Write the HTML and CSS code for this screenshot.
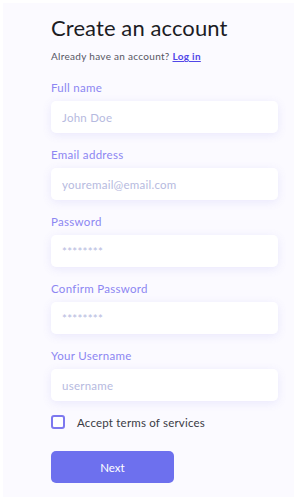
FILE: index.html
```html
<!DOCTYPE html>
<html lang="en">
<head>
    <meta charset="UTF-8">
    <meta name="viewport" content="width=device-width, initial-scale=1.0">
    <title>Create an account</title>
    <link rel="stylesheet" href="styles.css">
</head>
<body>
    <div class="panel">
        <form class="signup">
            <h1>Create an account</h1>
            <p class="subtitle">Already have an account? <a href="#">Log in</a></p>

            <div class="field">
                <label for="fullName">Full name</label>
                <input type="text" id="fullName" placeholder="John Doe">
            </div>
            <div class="field">
                <label for="email">Email address</label>
                <input type="email" id="email" placeholder="youremail@email.com">
            </div>
            <div class="field">
                <label for="password">Password</label>
                <input type="text" id="password" placeholder="********">
            </div>
            <div class="field">
                <label for="confirm">Confirm Password</label>
                <input type="text" id="confirm" placeholder="********">
            </div>
            <div class="field">
                <label for="username">Your Username</label>
                <input type="text" id="username" placeholder="username">
            </div>

            <label class="terms">
                <span class="box"></span>
                Accept terms of services
            </label>

            <button type="button" class="next-btn">Next</button>
        </form>
    </div>
</body>
</html>
```

FILE: styles.css
```css
html, body {
    margin: 0;
    padding: 0;
    background-color: #ffffff;
}
body {
    font-family: Lato, "Noto Sans", sans-serif;
    padding: 3px;
    box-sizing: border-box;
    height: 500px;
}
.panel {
    background-color: #fbfaff;
    height: 100%;
}
.signup {
    padding: 11px 0 0 48px;
    width: 227px;
}
h1 {
    font-size: 22px;
    font-weight: 400;
    color: #1c1c24;
    margin: 0;
    line-height: 28px;
    letter-spacing: 0.1px;
}
.subtitle {
    font-size: 10px;
    letter-spacing: 0.3px;
    color: #55555f;
    margin: 8px 0 18px 0;
    line-height: 12px;
}
.subtitle a {
    color: #5146e8;
    font-weight: 700;
}
.field {
    margin-bottom: 14px;
}
.field label {
    display: block;
    font-size: 11.5px;
    letter-spacing: 0.3px;
    line-height: 15px;
    color: #8c86f2;
    margin-bottom: 6px;
}
.field input {
    display: block;
    box-sizing: border-box;
    width: 100%;
    height: 32px;
    border: none;
    border-radius: 5px;
    background-color: #ffffff;
    box-shadow: 0 2px 10px rgba(110, 100, 230, 0.12);
    padding: 0 11px;
    font-family: inherit;
    font-size: 11.5px;
    letter-spacing: 0.25px;
    color: #333;
    outline: none;
}
.field input::placeholder {
    color: #b6bae0;
}
.terms {
    display: flex;
    align-items: center;
    gap: 12px;
    font-size: 11.5px;
    letter-spacing: 0.2px;
    color: #3a3a44;
}
.box {
    width: 14px;
    height: 14px;
    box-sizing: border-box;
    border: 2px solid #7d78ef;
    border-radius: 3px;
    background-color: #ffffff;
}
.next-btn {
    margin-top: 22px;
    width: 123px;
    height: 32px;
    border: none;
    border-radius: 5px;
    background-color: #6d70ee;
    color: #ffffff;
    font-family: inherit;
    font-size: 11.5px;
    cursor: pointer;
}
```
